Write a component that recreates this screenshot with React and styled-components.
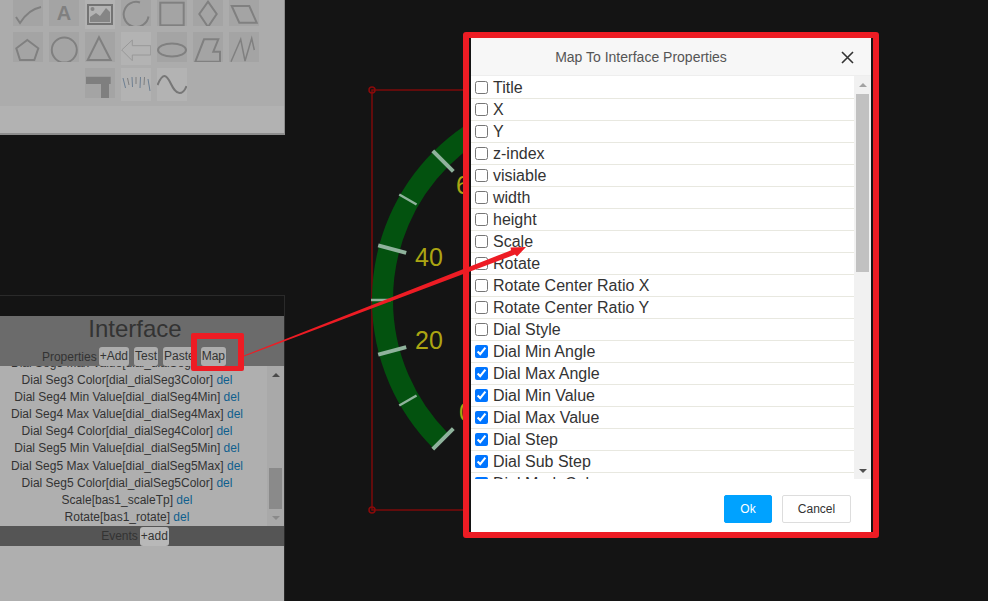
import React from "react";
import styled, { createGlobalStyle } from "styled-components";

const GlobalStyle = createGlobalStyle`
  html, body {
    margin: 0;
    height: 100%;
    background: #141414;
    overflow: hidden;
    font-family: "Liberation Sans", Arial, sans-serif;
  }
`;

const Page = styled.div`
  position: relative;
  width: 988px;
  height: 601px;
  display: flex;
  background: #141414;
  overflow: hidden;
`;

const LeftColumn = styled.div`
  width: 285px;
  flex: none;
  display: flex;
  flex-direction: column;
  justify-content: space-between;
`;

/* shape palette */
const PalettePanel = styled.div`
  height: 135px;
  box-sizing: border-box;
  background: #b2b2b2;
  border-right: 1px solid #8d8d8d;
  border-bottom: 2px solid #8d8d8d;
`;

const PaletteArea = styled.div`
  height: 106px;
  background: #acacac;
  overflow: hidden;
`;

const PaletteGrid = styled.div`
  display: grid;
  grid-template-columns: repeat(7, 30px);
  grid-auto-rows: 30px;
  gap: 6px;
  padding-left: 13px;
  margin-top: -4px;
`;

const Tile = styled.div`
  height: ${(p) => (p.$light ? "33px" : "30px")};
  background: ${(p) => (p.$light ? "#b3b3b3" : "#a4a4a4")};
  grid-column-start: ${(p) => p.$start || "auto"};
`;

const Glyph = styled.svg`
  display: block;
  width: 30px;
  height: 30px;
  fill: none;
  stroke: #808080;
  stroke-width: 2;
`;

const palette = [
  { body: <path d="M3 21 L7 27 C12 19 18 13 28 11" /> },
  { body: <text x="15" y="24" textAnchor="middle" fontSize="20" fontWeight="700" fill="#808080" stroke="none" fontFamily="Liberation Sans">A</text> },
  {
    light: true,
    body: (
      <>
        <rect x="3" y="9" width="24" height="19" stroke="#737373" />
        <path d="M5 26 L5 21 L11 17 L15 20 L21 12 L25 16 L25 26 Z" fill="#858585" stroke="none" />
        <circle cx="7.5" cy="13" r="2" fill="#858585" stroke="none" />
      </>
    ),
  },
  { body: <path d="M19 6.5 A12.5 12.5 0 1 0 27.5 20.5" /> },
  { body: <rect x="3.3" y="6.7" width="23.4" height="22.6" /> },
  { body: <path d="M15 5.7 L23.7 18 L15 31 L6.3 18 Z" /> },
  { body: <path d="M2.7 10 L20.3 10 L27.7 26.7 L10.3 26.7 Z" /> },
  { body: <path d="M14.3 8 L25.3 16.3 L21.3 28 L7 28 L3.3 16.3 Z" /> },
  { body: <circle cx="15.3" cy="18" r="12.5" /> },
  { body: <path d="M14 5.3 L25.7 28 L2.7 28 Z" /> },
  {
    light: true,
    body: <path d="M0.7 18 L11.3 8 L11.3 13.7 L29.7 13.7 L29.7 23 L11.3 23 L11.3 28.7 Z" stroke="#989898" strokeWidth="1" />,
  },
  { body: <ellipse cx="15" cy="18" rx="14" ry="6.5" /> },
  { body: <path d="M11 7.3 L25.3 7.3 L20.3 19.7 L27 19.7 L27 29.7 L2.3 29.7 Z" /> },
  { body: <path d="M2 29.7 L11.7 7.3 L16 29 L22.7 6.3 L25.3 18" strokeWidth="1.5" /> },
  {
    start: 3,
    body: <path d="M1 8.7 H25.7 V16 H24 V30 H16 V16 H1 Z" fill="#7f7f7f" stroke="none" />,
  },
  {
    light: true,
    body: (
      <g strokeWidth="1">
        <path d="M2 10 L4.5 20 M11 9 L11.5 19 M19.5 9 L19 20 M27 11 L29 23" stroke="#6d7f92" />
        <path d="M6.5 10 L8 17 M15 9 L15 16 M23.5 9 L23 17" stroke="#7f7f7f" />
      </g>
    ),
  },
  {
    light: true,
    body: <path d="M0.5 17 C3 11 5 8 7.5 8 C13 8 15 25 22.5 25 C25 25 28 22 29.5 18" stroke="#777" />,
  },
];

/* interface panel */
const InterfacePanel = styled.div`
  height: 306px;
  box-sizing: border-box;
  border-top: 1px solid #2a2a2a;
  border-right: 1px solid #2a2a2a;
  display: flex;
  flex-direction: column;
`;

const PanelHead = styled.div`
  height: 50px;
  margin-top: 20px;
  background: #6b6b6b;
  color: #333;
  text-align: center;
  padding-right: 14px;
`;

const PanelTitle = styled.div`
  font-size: 24px;
  line-height: 26px;
`;

const ToolRow = styled.div`
  display: flex;
  justify-content: center;
  align-items: center;
  height: 19px;
  margin-top: 5px;
  margin-right: 2px;
  font-size: 12px;
  gap: 5px;
`;

const ToolLabel = styled.span`
  margin-right: -3px;
`;

const SmallButton = styled.span`
  display: block;
  height: 19px;
  line-height: 18px;
  padding: 0 1px;
  font-size: 12px;
  color: #333;
  background: ${(p) => (p.$light ? "#b8b8b8" : "#adadad")};
  border-radius: 3px;
`;

const BindingArea = styled.div`
  height: 160px;
  display: flex;
  background: #afafaf;
  overflow: hidden;
`;

const BindingScroll = styled.div`
  flex: 1;
  padding-right: 13px;
  text-align: center;
  overflow: hidden;
`;

const BindingRows = styled.div`
  margin-top: -11px;
`;

const BindingRow = styled.div`
  font-size: 12px;
  line-height: 17.1px;
  color: #333;
  white-space: nowrap;
`;

const Del = styled.span`
  color: #0f5f8e;
`;

const Track = styled.div`
  width: 17px;
  flex: none;
  display: flex;
  flex-direction: column;
  background: ${(p) => p.$bg};
`;

const ArrowCell = styled.div`
  height: 17px;
  flex: none;
  display: flex;
  align-items: center;
  justify-content: center;
  &::before {
    content: "";
    border-left: 4px solid transparent;
    border-right: 4px solid transparent;
    ${(p) => (p.$down ? "border-top" : "border-bottom")}: 4px solid ${(p) => p.$color};
  }
`;

const Thumb = styled.div`
  height: ${(p) => p.$height}px;
  margin: ${(p) => p.$top}px 2px 0;
  background: ${(p) => p.$bg};
`;

const TrackFill = styled.div`
  flex: 1;
`;

const EventsBar = styled.div`
  height: 20px;
  background: #555;
  color: #333;
  font-size: 12px;
  display: flex;
  justify-content: center;
  align-items: center;
  gap: 2px;
  padding-right: 14px;
`;

const PanelRest = styled.div`
  flex: 1;
  background: #afafaf;
`;

const Canvas = styled.svg`
  display: block;
  flex: 1;
  height: 601px;
`;

/* dialog */
const DialogFrame = styled.div`
  position: absolute;
  left: 463px;
  top: 32px;
  width: 416px;
  height: 506px;
  box-sizing: border-box;
  border: 6px solid #ed1c24;
  border-radius: 3px;
`;

const Dialog = styled.div`
  height: 100%;
  box-sizing: border-box;
  border-left: 2px solid #141414;
  border-right: 2px solid #141414;
  background: #fff;
  display: flex;
  flex-direction: column;
`;

const DialogHead = styled.div`
  height: 38px;
  flex: none;
  box-sizing: border-box;
  background: #f7f7f7;
  border-bottom: 1px solid #eee;
  display: flex;
  align-items: center;
  position: relative;
`;

const DialogTitle = styled.div`
  width: 340px;
  text-align: center;
  font-size: 14px;
  color: #555;
`;

const CloseIcon = styled.svg`
  position: absolute;
  right: 17px;
  top: 13px;
  width: 13px;
  height: 13px;
  stroke: #333;
  stroke-width: 1.6;
`;

const DialogBody = styled.div`
  height: 403px;
  flex: none;
  display: flex;
  overflow: hidden;
`;

const OptionList = styled.div`
  flex: 1;
  padding-top: 1px;
  overflow: hidden;
`;

const OptionRow = styled.label`
  height: 22px;
  box-sizing: border-box;
  border-bottom: 1px solid #e8e8e0;
  display: flex;
  align-items: center;
  font-size: 16px;
  color: #333;
`;

const OptionCheck = styled.input`
  width: 13px;
  height: 13px;
  margin: 0 5px 0 4px;
  flex: none;
`;

const DialogFoot = styled.div`
  flex: 1;
  display: flex;
  justify-content: flex-end;
  align-items: flex-start;
  gap: 10px;
  padding: 16px 20px 0 0;
`;

const FootButton = styled.div`
  height: 28px;
  box-sizing: border-box;
  width: ${(p) => (p.$primary ? "48px" : "69px")};
  border-radius: 2px;
  border: 1px solid ${(p) => (p.$primary ? "#00a2ff" : "#ddd")};
  background: ${(p) => (p.$primary ? "#00a2ff" : "#fff")};
  color: ${(p) => (p.$primary ? "#fff" : "#333")};
  font-size: 12px;
  line-height: 26px;
  text-align: center;
`;

/* red markup drawn over the screenshot */
const MapHighlight = styled.div`
  position: absolute;
  left: 191px;
  top: 333px;
  width: 53px;
  height: 38px;
  box-sizing: border-box;
  border: 6px solid #ed1c24;
  border-bottom-width: 5px;
  border-radius: 2px;
`;

const ArrowLayer = styled.svg`
  position: absolute;
  left: 0;
  top: 0;
  width: 988px;
  height: 601px;
  pointer-events: none;
`;

const bindings = [
  "Dial Seg3 Max Value[dial_dialSeg3Max]",
  "Dial Seg3 Color[dial_dialSeg3Color]",
  "Dial Seg4 Min Value[dial_dialSeg4Min]",
  "Dial Seg4 Max Value[dial_dialSeg4Max]",
  "Dial Seg4 Color[dial_dialSeg4Color]",
  "Dial Seg5 Min Value[dial_dialSeg5Min]",
  "Dial Seg5 Max Value[dial_dialSeg5Max]",
  "Dial Seg5 Color[dial_dialSeg5Color]",
  "Scale[bas1_scaleTp]",
  "Rotate[bas1_rotate]",
];

const options = [
  ["Title", false],
  ["X", false],
  ["Y", false],
  ["z-index", false],
  ["visiable", false],
  ["width", false],
  ["height", false],
  ["Scale", false],
  ["Rotate", false],
  ["Rotate Center Ratio X", false],
  ["Rotate Center Ratio Y", false],
  ["Dial Style", false],
  ["Dial Min Angle", true],
  ["Dial Max Angle", true],
  ["Dial Min Value", true],
  ["Dial Max Value", true],
  ["Dial Step", true],
  ["Dial Sub Step", true],
  ["Dial Mark Color", true],
];

// gauge geometry, in page coordinates
const CX = 582;
const CY = 300;
const polar = (r, deg) => {
  const a = (deg * Math.PI) / 180;
  return [CX - r * Math.cos(a), CY - r * Math.sin(a)];
};

const ringPath = () => {
  const [x1, y1] = polar(199.5, -45);
  const [x2, y2] = polar(199.5, 225);
  return `M${x1} ${y1} A199.5 199.5 0 1 1 ${x2} ${y2}`;
};

const ticks = [-45, -30, -15, 0, 15, 30, 45];

const Gauge = () => (
  <Canvas viewBox="285 0 703 601">
    <path d="M372 510 V90 H792 V510 Z" fill="none" stroke="#7c0a0a" strokeWidth="1.5" />
    <circle cx="372" cy="90" r="3" fill="none" stroke="#8a0a0a" strokeWidth="1.5" />
    <circle cx="372" cy="510" r="3" fill="none" stroke="#8a0a0a" strokeWidth="1.5" />
    <path d={ringPath()} fill="none" stroke="#03520f" strokeWidth="21" />
    {ticks.map((deg, i) => {
      const major = i % 2 === 0;
      const [x1, y1] = polar(major ? 182 : 191, deg);
      const [x2, y2] = polar(211, deg);
      return <line key={deg} x1={x1} y1={y1} x2={x2} y2={y2} stroke="#8fb39c" strokeWidth={major ? 4 : 2.5} />;
    })}
    <g fill="#aca512" fontSize="25" fontFamily="Liberation Sans">
      <text x="415" y="349">20</text>
      <text x="415" y="266">40</text>
      <text x="456" y="193.5">60</text>
      <text x="459" y="421">0</text>
    </g>
  </Canvas>
);

const App = () => (
  <Page>
    <GlobalStyle />
    <LeftColumn>
      <PalettePanel>
        <PaletteArea>
          <PaletteGrid>
            {palette.map((item, i) => (
              <Tile key={i} $light={item.light} $start={item.start}>
                <Glyph viewBox="0 0 30 30">{item.body}</Glyph>
              </Tile>
            ))}
          </PaletteGrid>
        </PaletteArea>
      </PalettePanel>
      <InterfacePanel>
        <PanelHead>
          <PanelTitle>Interface</PanelTitle>
          <ToolRow>
            <ToolLabel>Properties</ToolLabel>
            <SmallButton>+Add</SmallButton>
            <SmallButton>Test</SmallButton>
            <SmallButton>Paste</SmallButton>
            <SmallButton>Map</SmallButton>
          </ToolRow>
        </PanelHead>
        <BindingArea>
          <BindingScroll>
            <BindingRows>
              {bindings.map((name) => (
                <BindingRow key={name}>
                  {name} <Del>del</Del>
                </BindingRow>
              ))}
            </BindingRows>
          </BindingScroll>
          <Track $bg="#a9a9a9">
            <ArrowCell $color="#4a4a4a" />
            <TrackFill />
            <Thumb $height={41} $top={0} $bg="#8a8a8a" />
            <ArrowCell $down $color="#8a8a8a" />
          </Track>
        </BindingArea>
        <EventsBar>
          Events
          <SmallButton $light>+add</SmallButton>
        </EventsBar>
        <PanelRest />
      </InterfacePanel>
    </LeftColumn>

    <Gauge />

    <DialogFrame>
      <Dialog>
        <DialogHead>
          <DialogTitle>Map To Interface Properties</DialogTitle>
          <CloseIcon viewBox="0 0 13 13">
            <path d="M1 1 L12 12 M12 1 L1 12" />
          </CloseIcon>
        </DialogHead>
        <DialogBody>
          <OptionList>
            {options.map(([label, checked]) => (
              <OptionRow key={label}>
                <OptionCheck type="checkbox" defaultChecked={checked} />
                {label}
              </OptionRow>
            ))}
          </OptionList>
          <Track $bg="#f1f1f1">
            <ArrowCell $color="#a3a3a3" />
            <Thumb $height={178} $top={1} $bg="#c1c1c1" />
            <TrackFill />
            <ArrowCell $down $color="#505050" />
          </Track>
        </DialogBody>
        <DialogFoot>
          <FootButton $primary>Ok</FootButton>
          <FootButton>Cancel</FootButton>
        </DialogFoot>
      </Dialog>
    </DialogFrame>

    <MapHighlight />
    <ArrowLayer viewBox="0 0 988 601">
      <path d="M244 355.5 L511 250.3 L510.5 247.5 L526 247 L517 256.5 L515 254.5 L244 356.5 Z" fill="#ed1c24" />
    </ArrowLayer>
  </Page>
);

export default App;
